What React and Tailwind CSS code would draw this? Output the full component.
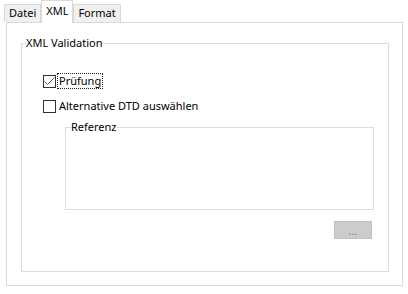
import React from "react";

const Tab = ({ label, active }) => {
  if (active) {
    return (
      <div className="relative z-10 -mb-px h-[23px] px-[4px] pt-[2px] bg-white border border-b-0 border-[#d9d9d9] leading-[16px]">
        {label}
      </div>
    );
  }
  return (
    <div className="h-[18px] px-[4px] bg-[#f0f0f0] border border-b-0 border-[#d9d9d9] leading-[16px]">
      {label}
    </div>
  );
};

const CheckBox = ({ checked, label, focused }) => {
  return (
    <div className="flex items-center h-[16px]">
      <div className="w-[13px] h-[13px] border border-[#333333] bg-white flex items-center justify-center">
        {checked && (
          <svg width="11" height="11" viewBox="0 0 11 11">
            <path d="M0.5 5.5 L3.5 8.5 L10.5 1.5" fill="none" stroke="#555555" strokeWidth="1" />
          </svg>
        )}
      </div>
      <span
        className={
          focused
            ? "ml-[1px] px-[1px] border border-dotted border-[#222] leading-[14px]"
            : "ml-[3px] leading-[16px]"
        }
      >
        {label}
      </span>
    </div>
  );
};

export default function App() {
  return (
    <div className="w-[408px] h-[294px] bg-white text-[11px] text-black font-['Noto_Sans',sans-serif] overflow-hidden">
      <div className="flex items-end pl-[4px] pt-[1px] h-[22px]">
        <Tab label="Datei" />
        <Tab label="XML" active />
        <Tab label="Format" />
      </div>
      <div className="ml-[6px] w-[397px] h-[264px] border border-[#d9d9d9] bg-white pt-[12px] pl-[14px]">
        <fieldset className="w-[368px] h-[237px] border border-[#dcdcdc] p-0 m-0">
          <legend className="ml-[4px] px-0 leading-[16px]">XML Validation</legend>
          <div className="ml-[21px] mt-[22px] flex flex-col gap-[9px]">
            <CheckBox checked focused label="Prüfung" />
            <CheckBox label="Alternative DTD auswählen" />
          </div>
          <fieldset className="ml-[43px] mt-[5px] w-[309px] h-[91px] border border-[#dcdcdc] p-0">
            <legend className="ml-[5px] px-0 leading-[16px]">Referenz</legend>
          </fieldset>
          <div className="ml-[312px] mt-[11px] w-[38px] h-[18px] bg-[#cccccc] border border-[#bfbfbf] flex items-center justify-center text-[#838383] leading-none">
            ...
          </div>
        </fieldset>
      </div>
    </div>
  );
}
